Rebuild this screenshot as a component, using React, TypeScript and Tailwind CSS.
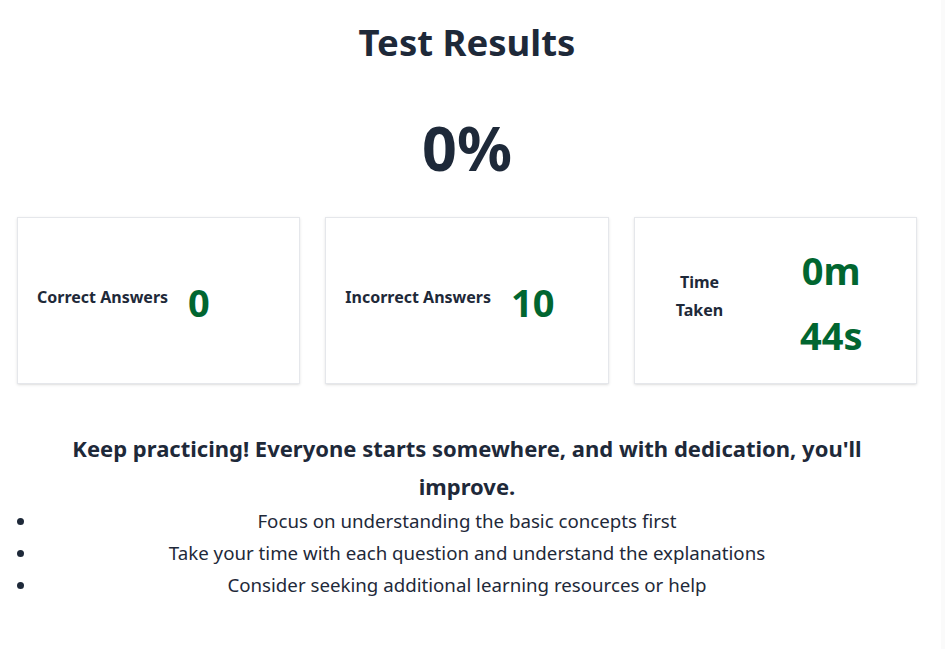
import React from 'react';

const StatCard = ({ label, value }: { label: string; value: string }) => (
  <div className="h-[167px] bg-white border border-gray-200 shadow-sm flex items-center gap-5 px-[19px]">
    <span className="mb-2 text-base font-bold text-gray-800">{label}</span>
    <span className="mt-1 text-[38px] font-bold text-green-800">{value}</span>
  </div>
);

const TimeCard = () => (
  <div className="h-[167px] bg-white border border-gray-200 shadow-sm flex items-center gap-5 px-[19px]">
    <div className="mb-[10px] w-[92px] text-center text-base font-bold leading-7 text-gray-800">
      Time
      <br />
      Taken
    </div>
    <div className="w-[132px] text-center text-[38px] font-bold leading-[65px] text-green-800 pt-1">
      <div>0m</div>
      <div>44s</div>
    </div>
  </div>
);

export default function App() {
  const tips = [
    'Focus on understanding the basic concepts first',
    'Take your time with each question and understand the explanations',
    'Consider seeking additional learning resources or help',
  ];

  return (
    <div className="min-h-screen flex bg-white text-gray-800" style={{ fontFamily: '"Noto Sans", sans-serif' }}>
      <div className="w-[934px] pt-[22px]">
        <h1 className="text-[36.5px] leading-10 font-bold text-center text-gray-800">Test Results</h1>

        <div className="mt-[56px] text-[61px] leading-[60px] font-bold text-center text-gray-800">0%</div>

        <div className="ml-[17px] mt-[39px] w-[900px] grid grid-cols-3 gap-[25px]">
          <StatCard label="Correct Answers" value="0" />
          <StatCard label="Incorrect Answers" value="10" />
          <TimeCard />
        </div>

        <p className="mt-[45px] mx-auto max-w-[800px] text-[22px] font-bold text-center leading-[38px] text-gray-800">
          Keep practicing! Everyone starts somewhere, and with dedication, you'll improve.
        </p>

        <ul className="mx-[17px] px-5 list-disc text-center text-[18.7px] leading-8 text-gray-800">
          {tips.map((tip) => (
            <li key={tip}>{tip}</li>
          ))}
        </ul>
      </div>
      <div className="flex-1" />
      <div className="w-[4px] bg-[#fafafa]" />
    </div>
  );
}
